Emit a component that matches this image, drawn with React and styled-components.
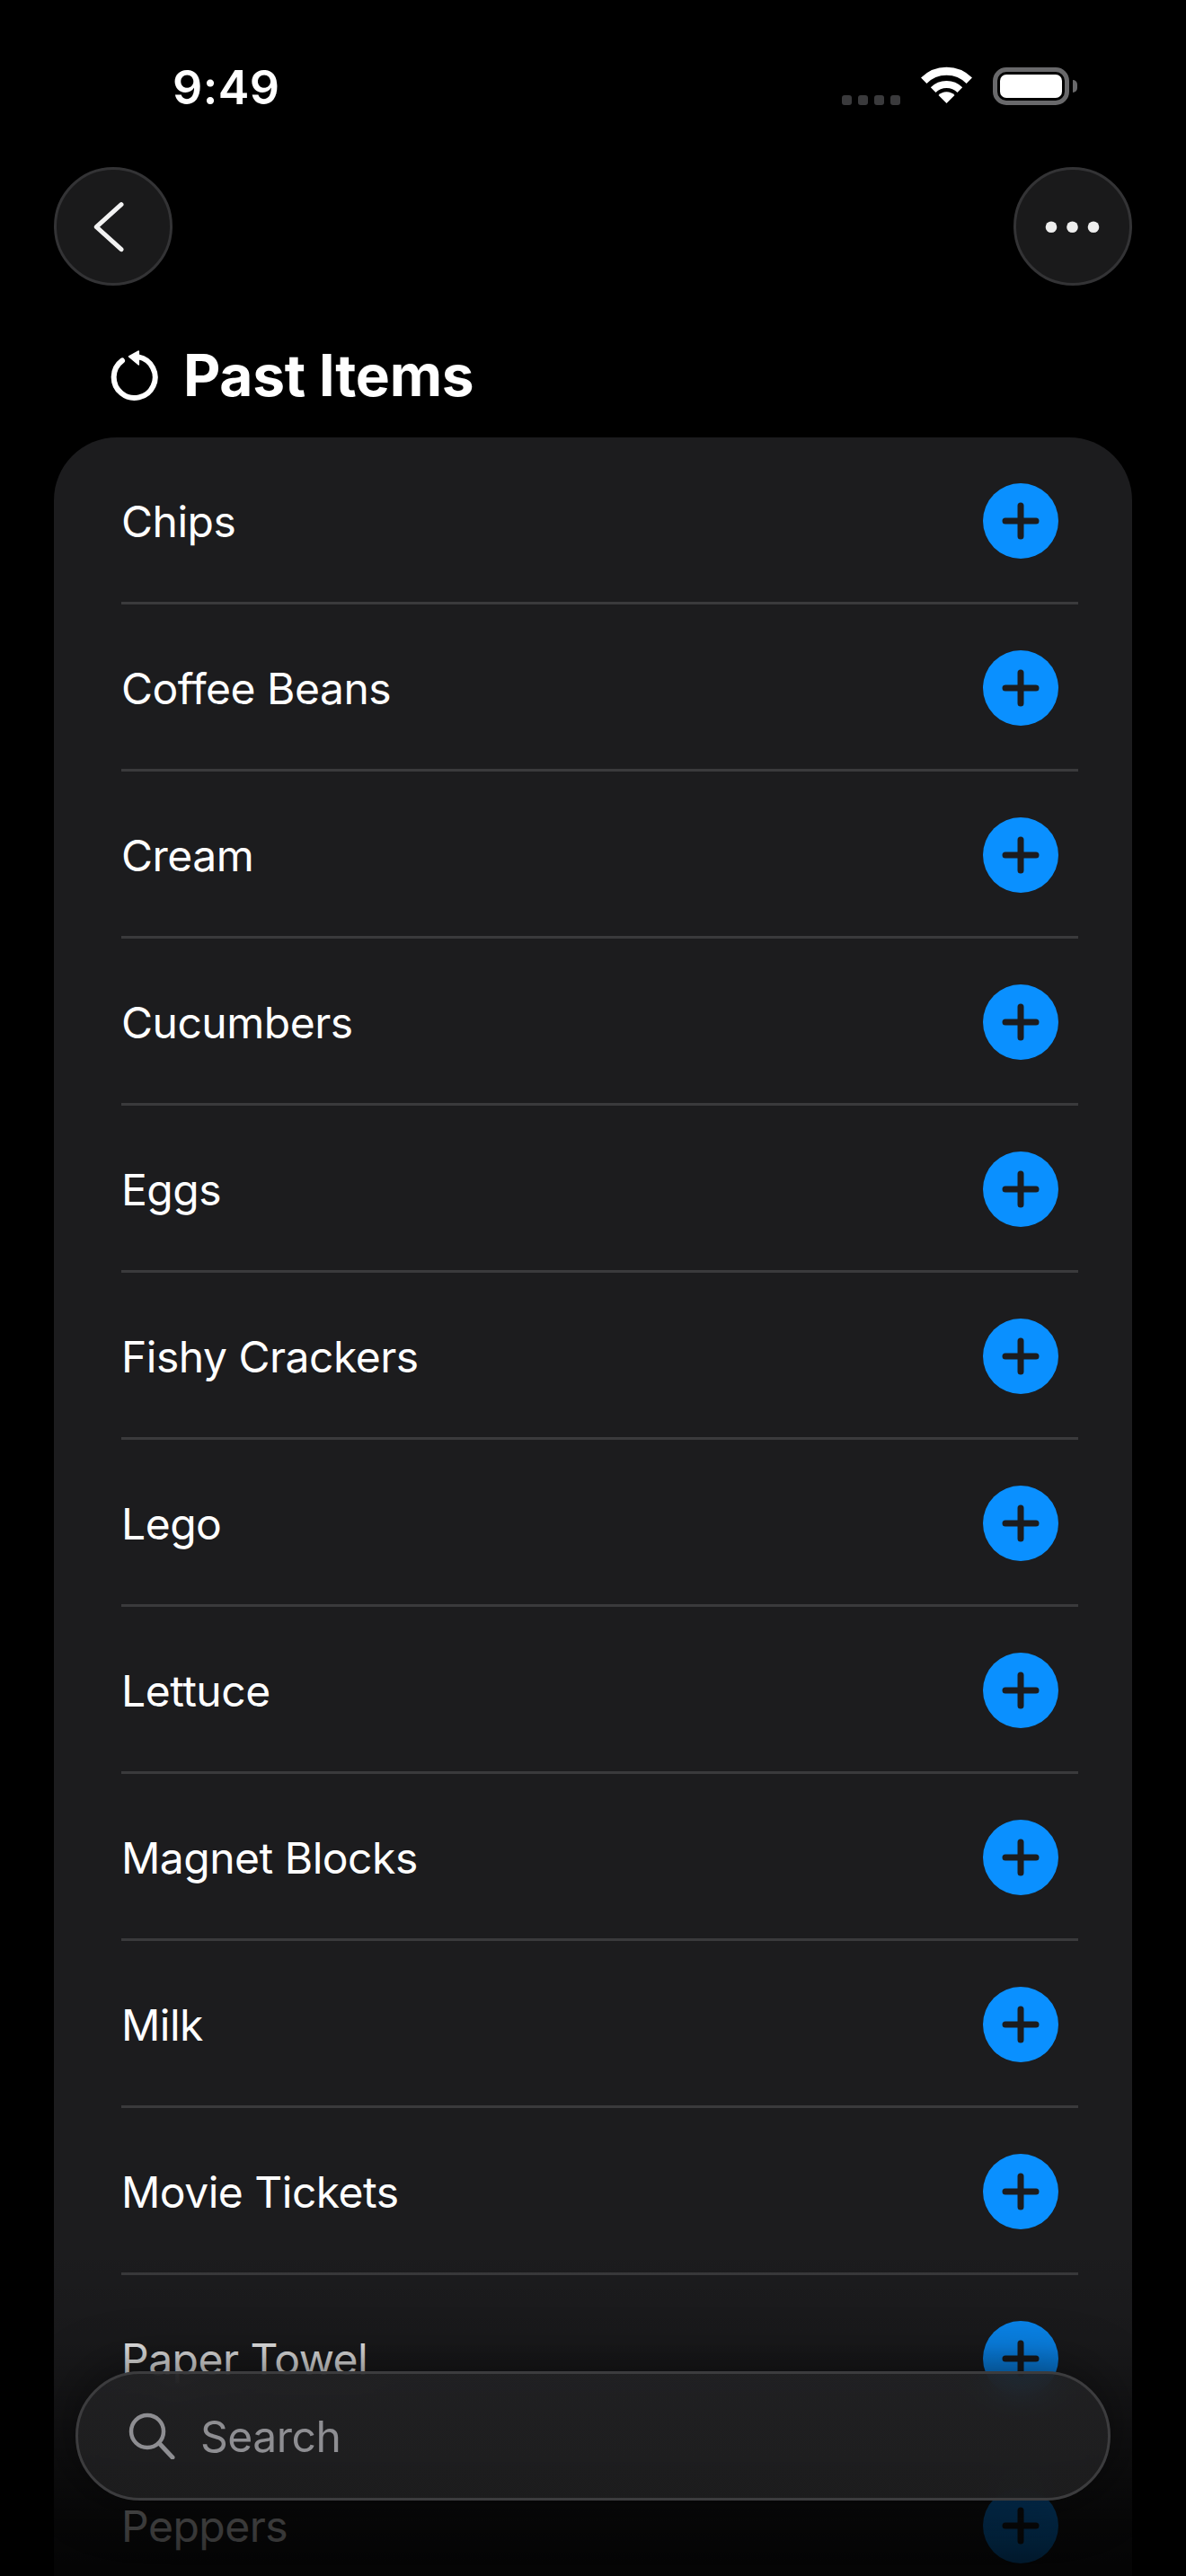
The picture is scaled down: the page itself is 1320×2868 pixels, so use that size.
import React from "react";
import styled, { createGlobalStyle } from "styled-components";

const GlobalStyle = createGlobalStyle`
  html, body {
    margin: 0;
    padding: 0;
    background: #000;
  }
  * {
    box-sizing: border-box;
  }
`;

const Screen = styled.div`
  position: relative;
  width: 1320px;
  height: 2868px;
  overflow: hidden;
  background: #000;
  color: #fff;
  font-family: Inter, "Liberation Sans", sans-serif;
`;

const StatusBar = styled.header`
  display: flex;
  justify-content: space-between;
  align-items: flex-start;
  height: 186px;
  padding: 77px 122px 0 192px;
`;

const Clock = styled.span`
  font-size: 52px;
  font-weight: 600;
  line-height: 42px;
  letter-spacing: 0.4px;
`;

const Indicators = styled.div`
  display: flex;
  align-items: flex-end;
  height: 42px;
  margin-top: -2px;
`;

const SignalDots = styled.div`
  display: flex;
  gap: 7px;
  margin-right: 22px;
`;

const SignalDot = styled.span`
  width: 11px;
  height: 11px;
  border-radius: 3px;
  background: #3a3a3c;
`;

const Wifi = styled.svg`
  display: block;
  width: 60px;
  height: 44px;
  margin-right: 21px;
`;

const Battery = styled.div`
  position: relative;
  width: 85px;
  height: 42px;
  padding: 3px;
  border: 5px solid #69696b;
  border-radius: 15px;
  margin-right: 8px;
`;

const BatteryLevel = styled.div`
  width: 100%;
  height: 100%;
  background: #fff;
  border-radius: 7px;
`;

const BatteryCap = styled.span`
  position: absolute;
  top: 9px;
  right: -14px;
  width: 5px;
  height: 14px;
  border-radius: 0 5px 5px 0;
  background: #69696b;
`;

const NavBar = styled.nav`
  display: flex;
  justify-content: space-between;
  padding: 0 60px;
`;

const RoundButton = styled.button`
  display: block;
  width: 132px;
  height: 132px;
  padding: 0;
  border: 3px solid #333335;
  border-radius: 50%;
  background: #1a1a1b;
  cursor: pointer;
`;

const ButtonGlyph = styled.svg`
  display: block;
  width: 132px;
  height: 132px;
  margin: -3px;
`;

const TitleRow = styled.div`
  display: flex;
  align-items: center;
  gap: 24px;
  height: 60px;
  margin: 70px 0 39px;
  padding-left: 120px;
`;

const HistoryIcon = styled.svg`
  display: block;
  width: 60px;
  height: 60px;
`;

const Title = styled.h1`
  margin: 0;
  font-size: 64px;
  font-weight: 700;
  line-height: 60px;
  letter-spacing: -0.3px;
`;

const Card = styled.section`
  margin: 0 60px;
  padding: 0 60px 0 75px;
  border-radius: 70px 70px 0 0;
  background: #1c1c1e;
`;

const Row = styled.div`
  display: flex;
  align-items: center;
  justify-content: space-between;
  height: 186px;
  padding: 3px 22px 0 0;
  border-bottom: 3px solid #3a3a3c;
`;

const ItemName = styled.span`
  margin-top: 2px;
  font-size: 48px;
  font-weight: 400;
  line-height: 60px;
  letter-spacing: -0.5px;
`;

const AddButton = styled.button`
  display: block;
  width: 84px;
  height: 84px;
  padding: 0;
  border: 0;
  border-radius: 50%;
  background: #0a90ff;
  cursor: pointer;
`;

const PlusGlyph = styled.svg`
  display: block;
  width: 84px;
  height: 84px;
`;

const BottomFade = styled.div`
  position: absolute;
  left: 0;
  right: 0;
  bottom: 0;
  height: 368px;
  pointer-events: none;
  background: linear-gradient(
    to bottom,
    rgba(0, 0, 0, 0) 0%,
    rgba(0, 0, 0, 0.12) 30%,
    rgba(0, 0, 0, 0.75) 84%,
    rgba(0, 0, 0, 0.85) 100%
  );
`;

const SearchBar = styled.div`
  position: absolute;
  left: 84px;
  top: 2640px;
  display: flex;
  align-items: center;
  gap: 28px;
  width: 1152px;
  height: 144px;
  padding: 0 0 0 56px;
  border: 3px solid #3c3c3e;
  border-radius: 72px;
  background: linear-gradient(rgba(34, 34, 36, 0.9), rgba(30, 30, 31, 0.94));
  backdrop-filter: blur(16px);
  box-shadow: 0 0 60px rgba(0, 0, 0, 0.5);
`;

const SearchIcon = styled.svg`
  display: block;
  width: 52px;
  height: 52px;
  flex: none;
`;

const SearchPlaceholder = styled.span`
  margin-top: 2px;
  font-size: 48px;
  line-height: 60px;
  letter-spacing: -0.5px;
  color: #8e8e92;
`;

const ITEMS = [
  "Chips",
  "Coffee Beans",
  "Cream",
  "Cucumbers",
  "Eggs",
  "Fishy Crackers",
  "Lego",
  "Lettuce",
  "Magnet Blocks",
  "Milk",
  "Movie Tickets",
  "Paper Towel",
  "Peppers",
];

export default function App() {
  return (
    <Screen>
      <GlobalStyle />

      <StatusBar>
        <Clock>9:49</Clock>
        <Indicators>
          <SignalDots>
            <SignalDot />
            <SignalDot />
            <SignalDot />
            <SignalDot />
          </SignalDots>
          <Wifi viewBox="0 0 60 44" aria-hidden="true">
            <path d="M4.2 16.7A35.8 35.8 0 0 1 54.8 16.7" fill="none" stroke="#fff" strokeWidth="9" />
            <path d="M14.65 27.15A21 21 0 0 1 44.35 27.15" fill="none" stroke="#fff" strokeWidth="8" />
            <path d="M29.5 42L20.5 33A12.7 12.7 0 0 1 38.5 33Z" fill="#fff" />
          </Wifi>
          <Battery>
            <BatteryLevel />
            <BatteryCap />
          </Battery>
        </Indicators>
      </StatusBar>

      <NavBar>
        <RoundButton aria-label="Back">
          <ButtonGlyph viewBox="0 0 132 132">
            <path
              d="M75 41.7L47.3 66.7L75 91.7"
              fill="none"
              stroke="#f2f2f2"
              strokeWidth="5"
              strokeLinecap="round"
              strokeLinejoin="round"
            />
          </ButtonGlyph>
        </RoundButton>
        <RoundButton aria-label="More">
          <ButtonGlyph viewBox="0 0 132 132">
            <circle cx="42" cy="66.7" r="6.3" fill="#eee" />
            <circle cx="65.5" cy="66.7" r="6.3" fill="#eee" />
            <circle cx="89" cy="66.7" r="6.3" fill="#eee" />
          </ButtonGlyph>
        </RoundButton>
      </NavBar>

      <TitleRow>
        <HistoryIcon viewBox="0 0 60 60" aria-hidden="true">
          <path d="M16 13.5A23 23 0 1 0 34 9.4" fill="none" stroke="#fff" strokeWidth="6" strokeLinecap="round" />
          <path d="M23.5 9L34.3 3V18Z" fill="#fff" stroke="#fff" strokeWidth="1.5" strokeLinejoin="round" />
        </HistoryIcon>
        <Title>Past Items</Title>
      </TitleRow>

      <Card>
        {ITEMS.map((item) => (
          <Row key={item}>
            <ItemName>{item}</ItemName>
            <AddButton aria-label={`Add ${item}`}>
              <PlusGlyph viewBox="0 0 84 84">
                <path
                  d="M42 25V59M25 42H59"
                  fill="none"
                  stroke="#1c1c1e"
                  strokeWidth="7"
                  strokeLinecap="round"
                />
              </PlusGlyph>
            </AddButton>
          </Row>
        ))}
      </Card>

      <BottomFade />

      <SearchBar>
        <SearchIcon viewBox="0 0 52 52" aria-hidden="true">
          <circle cx="21" cy="21" r="18" fill="none" stroke="#8e8e92" strokeWidth="4.5" />
          <path d="M34 34L49 50" fill="none" stroke="#8e8e92" strokeWidth="5" strokeLinecap="round" />
        </SearchIcon>
        <SearchPlaceholder>Search</SearchPlaceholder>
      </SearchBar>
    </Screen>
  );
}
